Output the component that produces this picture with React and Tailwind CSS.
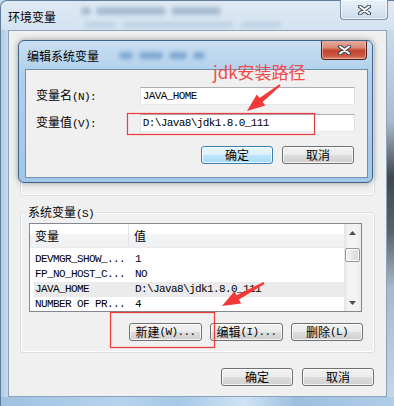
import React from 'react';

const cjk = "font-['Noto_Sans_CJK_SC',sans-serif]";
const mono = "font-['Liberation_Mono','Noto_Sans_CJK_SC',monospace] text-[11px] tracking-[-0.6px]";

function Mono({ children }) {
    return <span className={mono}>{children}</span>;
}

function WinButton({ children, primary, className = '' }) {
    const skin = primary
        ? 'border-[#3c7fb1] bg-[linear-gradient(to_bottom,#eaf6fd_0%,#d9f0fc_50%,#bee6fd_50%,#a7d9f5_100%)]'
        : 'border-[#707070] bg-[linear-gradient(to_bottom,#f2f2f2_0%,#ebebeb_50%,#dddddd_50%,#cfcfcf_100%)]';
    return (
        <div className={`flex h-[18px] items-center justify-center rounded-[3px] border text-[12px] leading-none text-black shadow-[inset_0_0_0_1px_rgba(255,255,255,0.75)] ${skin} ${className}`}>
            {children}
        </div>
    );
}

function CloseGlyph() {
    return (
        <svg width="13" height="10" viewBox="0 0 13 10">
            <path d="M2 1.5 L11 8.5 M11 1.5 L2 8.5" stroke="#3b4652" strokeWidth="4" strokeLinecap="round" />
            <path d="M2 1.5 L11 8.5 M11 1.5 L2 8.5" stroke="#ffffff" strokeWidth="2" strokeLinecap="round" />
        </svg>
    );
}

function TextBox({ children }) {
    return (
        <div className="flex h-[18px] w-[216px] items-center border border-[#abadb3] border-b-[#e3e9ef] border-l-[#e2e3ea] border-r-[#dbdfe6] bg-white pl-[2px]">
            <span className={`${mono} text-black`}>{children}</span>
        </div>
    );
}

const rows = [
    { name: 'DEVMGR_SHOW_...', value: '1' },
    { name: 'FP_NO_HOST_C...', value: 'NO' },
    { name: 'JAVA_HOME', value: 'D:\\Java8\\jdk1.8.0_111', selected: true },
    { name: 'NUMBER_OF_PR...', value: '4' },
];

function EditDialog() {
    return (
        <div className="absolute left-[9px] top-[9px] flex h-[143px] w-[355px] flex-col overflow-hidden rounded-[6px] border border-[#3e6388] bg-[linear-gradient(to_bottom,#c9def1_0%,#aecfec_25%,#a3c7e8_100%)] shadow-[0_0_6px_rgba(0,0,0,0.35)]">
            {/* title bar */}
            <div className="relative flex h-[28px] shrink-0 items-start justify-between">
                <div className="pointer-events-none absolute left-[100px] top-[11px] flex gap-[6px] opacity-50 blur-[2px]">
                    <div className="h-[7px] w-[14px] rounded-full bg-[#3d78b4]" />
                    <div className="h-[7px] w-[24px] rounded-full bg-[#3d78b4]" />
                    <div className="h-[7px] w-[18px] rounded-full bg-[#3d78b4]" />
                    <div className="h-[7px] w-[12px] rounded-full bg-[#3d78b4]" />
                </div>
                <span className="relative pl-[8px] pt-[6px] text-[12px] text-black">编辑系统变量</span>
                <div className="relative mr-[5px] -mt-[1px] flex h-[20px] w-[46px] items-center justify-center rounded-b-[4px] border border-t-0 border-[#4b211b] bg-[linear-gradient(to_bottom,#eab1a3_0%,#d98a76_40%,#c4432d_55%,#cc5a44_85%,#e08a70_100%)] shadow-[inset_0_0_0_1px_rgba(255,210,200,0.5)]">
                    <CloseGlyph />
                </div>
            </div>
            {/* body */}
            <div className="flex h-[109px] shrink-0">
                <div className="w-[6px]" />
                <div className="flex w-[343px] flex-col border border-[#6f8fae] bg-[#f0f0f0] pl-[10px] pr-[12px] pt-[17px]">
                    <div className="flex h-[18px] items-center">
                        <span className="w-[104px] text-[12px] text-black">变量名<Mono>(N):</Mono></span>
                        <TextBox>JAVA_HOME</TextBox>
                    </div>
                    <div className="mt-[9px] flex h-[18px] items-center">
                        <span className="w-[104px] text-[12px] text-black">变量值<Mono>(V):</Mono></span>
                        <TextBox>D:\Java8\jdk1.8.0_111</TextBox>
                    </div>
                    <div className="mt-[14px] flex justify-end gap-[9px] pr-[1px]">
                        <WinButton primary className="w-[72px]">确定</WinButton>
                        <WinButton className="w-[72px]">取消</WinButton>
                    </div>
                </div>
            </div>
        </div>
    );
}

function VariableList() {
    return (
        <div className="ml-[8px] mt-[10px] flex h-[89px] w-[333px] border border-[#828790] bg-white">
            <div className="flex-1">
                <div className="flex h-[24px] border-b border-[#eaeaea] bg-[linear-gradient(to_bottom,#ffffff_0%,#ffffff_45%,#f3f4f6_45%,#eff0f2_100%)] text-[12px] text-black">
                    <div className="flex w-[99px] items-center border-r border-[#e3e5e8] pl-[5px]">变量</div>
                    <div className="flex items-center pl-[5px]">值</div>
                </div>
                <div className="h-[59px] overflow-hidden pt-[4px]">
                    {rows.map((r) => (
                        <div
                            key={r.name}
                            className={`ml-[4px] flex h-[15px] items-center pl-[1px] text-black ${r.selected ? 'bg-[#ebebeb]' : ''}`}
                        >
                            <span className={`${mono} w-[100px] whitespace-nowrap`}>{r.name}</span>
                            <span className={`${mono} whitespace-nowrap`}>{r.value}</span>
                        </div>
                    ))}
                </div>
            </div>
            {/* scrollbar */}
            <div className="flex w-[17px] flex-col bg-[linear-gradient(to_right,#e4e4e4_0%,#f3f3f3_25%,#f3f3f3_75%,#e9e9e9_100%)]">
                <div className="flex h-[17px] items-center justify-center">
                    <svg width="7" height="4" viewBox="0 0 7 4"><path d="M0 4 L3.5 0 L7 4 Z" fill="#4d4d4d" /></svg>
                </div>
                <div className="mx-[1px] mt-[7px] h-[14px] rounded-[2px] border border-[#979797] bg-[linear-gradient(to_right,#f4f4f4_0%,#e6e6e6_50%,#d6d6d6_100%)] shadow-[inset_0_0_0_1px_#fbfbfb]" />
                <div className="flex-1" />
                <div className="flex h-[17px] items-center justify-center">
                    <svg width="7" height="4" viewBox="0 0 7 4"><path d="M0 0 L7 0 L3.5 4 Z" fill="#4d4d4d" /></svg>
                </div>
            </div>
        </div>
    );
}

function Annotations() {
    return (
        <div className="pointer-events-none absolute inset-0">
            <svg width="394" height="406" viewBox="0 0 394 406" className="absolute left-0 top-0">
                <rect x="127.5" y="113.5" width="187" height="21" fill="none" stroke="#ec3b3b" strokeWidth="1.2" />
                <rect x="110.5" y="312.5" width="104" height="35" fill="none" stroke="#ec3b3b" strokeWidth="1.2" />
                <polygon
                    points="280.6,85.8 262.6,101.9 265.4,105.4 247,111 256.8,94.4 259.6,97.9 279.4,84.2"
                    fill="#f2393a"
                />
                <polygon
                    points="264.5,283.9 239,299.6 241.2,303.5 222,306 234.4,291.3 236.6,295.2 263.5,282.1"
                    fill="#f2393a"
                />
            </svg>
            <span className={`absolute left-[213px] top-[62px] text-[17px] leading-[20px] text-[#f24a4a] ${cjk}`}>
                jdk安装路径
            </span>
        </div>
    );
}

export default function App() {
    return (
        <div className={`relative h-[406px] w-[394px] overflow-hidden bg-[#c6d9ec] ${cjk}`}>
            <div className="flex h-full w-full flex-col rounded-tl-[7px] border-l border-t border-[#5f7c9b] bg-[linear-gradient(to_bottom,#dfe9f3_0%,#d2e2f1_8%,#c2d7eb_100%)]">
                {/* title bar */}
                <div className="relative flex h-[29px] shrink-0 items-start justify-between">
                    <div className="pointer-events-none absolute left-[80px] top-[6px] flex gap-[5px] opacity-40 blur-[2px]">
                        <div className="h-[8px] w-[10px] rounded-full bg-[#5d7fa3]" />
                        <div className="h-[8px] w-[70px] rounded-full bg-[#5d7fa3]" />
                        <div className="h-[8px] w-[50px] rounded-full bg-[#5d7fa3]" />
                    </div>
                    <div className="pointer-events-none absolute left-[84px] top-[21px] flex gap-[8px] opacity-30 blur-[2px]">
                        <div className="h-[5px] w-[30px] rounded-full bg-[#7f9fc0]" />
                        <div className="h-[5px] w-[110px] rounded-full bg-[#7f9fc0]" />
                        <div className="h-[5px] w-[40px] rounded-full bg-[#7f9fc0]" />
                    </div>
                    <span className="relative pl-[7px] pt-[7px] text-[12px] text-black">环境变量</span>
                    <div className="relative mr-[6px] -mt-[1px] flex h-[20px] w-[48px] items-center justify-center rounded-b-[4px] border border-t-0 border-[#7f95ad] bg-[linear-gradient(to_bottom,#e9f1f8_0%,#dbe7f2_50%,#cbdbea_100%)] shadow-[inset_0_0_0_1px_rgba(255,255,255,0.6)]">
                        <CloseGlyph />
                    </div>
                </div>
                {/* middle */}
                <div className="flex h-[367px] shrink-0">
                    <div className="w-[7px] bg-[linear-gradient(to_right,#b0cbe4,#c7dbee)]" />
                    <div className="relative flex w-[379px] flex-col border border-[#8da2b8] bg-[#f0f0f0]">
                        {/* user variables group (covered by dialog) */}
                        <div className="ml-[11px] mt-[9px] h-[156px] w-[355px] shrink-0 rounded-[3px] border border-[#d5dfe5] shadow-[inset_0_0_0_1px_#ffffff]" />
                        {/* system variables group */}
                        <div className="relative ml-[11px] mt-[16px] flex h-[141px] w-[355px] shrink-0 flex-col rounded-[3px] border border-[#d5dfe5] shadow-[inset_0_0_0_1px_#ffffff]">
                            <span className="absolute left-[6px] top-[-9px] bg-[#f0f0f0] px-[1px] text-[12px] leading-[16px] text-black">
                                系统变量<Mono>(S)</Mono>
                            </span>
                            <VariableList />
                            <div className="mt-[11px] flex justify-end gap-[8px] pr-[11px]">
                                <WinButton className="w-[73px]">新建<Mono>(W)...</Mono></WinButton>
                                <WinButton className="w-[73px]">编辑<Mono>(I)...</Mono></WinButton>
                                <WinButton className="w-[72px]">删除<Mono>(L)</Mono></WinButton>
                            </div>
                        </div>
                        <div className="mt-[15px] flex justify-end gap-[9px] pr-[12px]">
                            <WinButton className="w-[72px]">确定</WinButton>
                            <WinButton className="w-[72px]">取消</WinButton>
                        </div>
                        <EditDialog />
                    </div>
                    <div className="w-[7px] bg-[linear-gradient(to_bottom,#c9dbeb_0%,#a9bccd_25%,#40474f_40%,#5a636c_55%,#a6b8c9_70%,#c4d6e7_100%)]" />
                </div>
                {/* bottom frame */}
                <div className="h-[9px] flex-1 bg-[linear-gradient(to_right,#9fc2e2_0%,#b6d3ec_30%,#a7c9e7_45%,#cfe3f4_62%,#9dbfdf_75%,#b0cde8_100%)]" />
            </div>
            <Annotations />
        </div>
    );
}
